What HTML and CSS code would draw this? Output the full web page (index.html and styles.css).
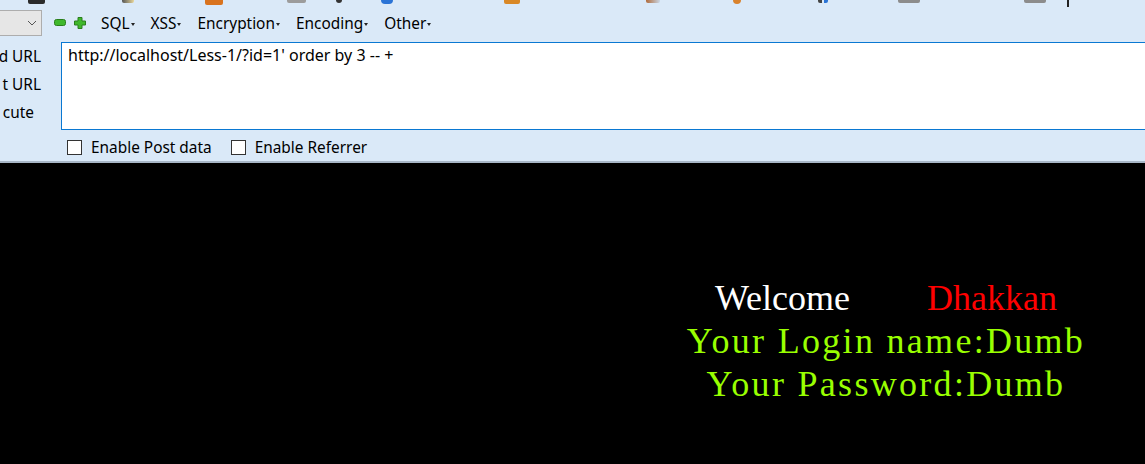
FILE: index.html
```html
<!DOCTYPE html>
<html>
<head>
<meta charset="utf-8">
<link rel="stylesheet" href="styles.css">
</head>
<body>
<div class="panel">
  <div class="iconstrip">
    <span class="frag f1"></span>
    <span class="frag f2"></span>
    <span class="frag f3"></span>
    <span class="frag f4"></span>
    <span class="frag f5"></span>
    <span class="frag f6"></span>
    <span class="frag f7"></span>
    <span class="frag f8"></span>
    <span class="frag f9"></span>
    <span class="frag f10"></span>
    <span class="frag f11"></span>
    <span class="frag f12"></span>
    <span class="frag f13"></span>
  </div>
  <div class="toolbar">
    <div class="select">
      <svg width="10" height="6" viewBox="0 0 10 6"><path d="M1 1 L5 5 L9 1" fill="none" stroke="#555" stroke-width="1"/></svg>
    </div>
    <svg class="ico minus" width="12" height="8" viewBox="0 0 12 8"><rect x="0.5" y="0.5" width="11" height="6" rx="2" fill="#3fb82c" stroke="#2a7e1c"/></svg>
    <svg class="ico plus" width="12" height="12" viewBox="0 0 12 12"><path d="M4 0.5 H8 V4 H11.5 V8 H8 V11.5 H4 V8 H0.5 V4 H4 Z" fill="#3fb82c" stroke="#2a7e1c" stroke-linejoin="round"/></svg>
    <div class="menu">
      <span class="mi">SQL<i class="tri"></i></span>
      <span class="mi">XSS<i class="tri"></i></span>
      <span class="mi">Encryption<i class="tri"></i></span>
      <span class="mi">Encoding<i class="tri"></i></span>
      <span class="mi">Other<i class="tri"></i></span>
    </div>
  </div>
  <div class="main">
    <div class="labels">
      <div class="lbl">d URL</div>
      <div class="lbl">t URL</div>
      <div class="lbl lbl-ex">cute</div>
    </div>
    <div class="urlbox">http://localhost/Less-1/?id=1' order by 3 -- +</div>
  </div>
  <div class="checks">
    <label class="chk"><span class="box"></span>Enable Post data</label>
    <label class="chk"><span class="box"></span>Enable Referrer</label>
  </div>
</div>
<div class="page">
  <div class="result">
    <div class="line"><span class="white">Welcome</span><span class="red">Dhakkan</span></div>
    <div class="line green">Your Login name:Dumb</div>
    <div class="line green">Your Password:Dumb</div>
  </div>
</div>
</body>
</html>
```
FILE: styles.css
```css
html, body {
  margin: 0;
  padding: 0;
  background: #000;
  overflow: hidden;
}
body {
  width: 1145px;
  height: 464px;
}
.panel {
  background: #dae9f8;
  height: 161px;
  border-bottom: 2px solid #a8b7c7;
  overflow: hidden;
  font-family: "Noto Sans", "Open Sans", sans-serif;
  font-size: 15.4px;
  color: #000;
}
.iconstrip {
  height: 10px;
  display: flex;
  align-items: flex-start;
}
.frag {
  display: block;
  height: 4px;
  border-radius: 0 0 2px 2px;
}
.f1 { margin-left: 28px; width: 17px; background: #2b2b2b; }
.f2 { margin-left: 77px; width: 12px; height: 3px; background: linear-gradient(90deg,#555,#e8d69a); }
.f3 { margin-left: 71px; width: 18px; height: 5px; background: #d9731e; }
.f4 { margin-left: 64px; width: 19px; height: 3px; background: #9c9c9c; }
.f5 { margin-left: 30px; width: 6px; height: 3px; background: #333; border-radius: 0 0 4px 4px; }
.f6 { margin-left: 39px; width: 12px; height: 4px; background: #2b74d6; border-radius: 0 0 6px 6px; }
.f7 { margin-left: 111px; width: 16px; height: 4px; background: #d98826; }
.f8 { margin-left: 126px; width: 14px; height: 3px; background: linear-gradient(90deg,#b06a3a,#c9d7e6); }
.f9 { margin-left: 73px; width: 8px; height: 4px; background: #d9822c; border-radius: 0 0 4px 4px; }
.f10 { margin-left: 77px; width: 10px; height: 3px; background: linear-gradient(90deg,#444 0 40%,transparent 40% 60%,#2b74d6 60%); }
.f11 { margin-left: 70px; width: 22px; height: 3px; background: #8c8c8c; }
.f12 { margin-left: 104px; width: 22px; height: 3px; background: #8c8c8c; }
.f13 { margin-left: 21px; width: 2px; height: 7px; background: #222; border-radius: 0; }

.toolbar {
  height: 26px;
  display: flex;
  align-items: center;
}
.select {
  width: 42px;
  height: 26px;
  box-sizing: border-box;
  border: 1px solid #adadad;
  border-left: none;
  background: #e6e6e6;
  display: flex;
  align-items: center;
  justify-content: flex-end;
  padding-right: 4px;
}
.ico { display: block; flex: none; }
.minus { margin-left: 12px; }
.plus { margin-left: 8px; }
.menu {
  display: flex;
  margin-left: 15px;
  margin-top: 2px;
  gap: 16px;
  line-height: 20px;
}
.mi {
  display: flex;
  align-items: center;
  white-space: nowrap;
}
.tri {
  display: block;
  width: 0;
  height: 0;
  border-left: 2px solid transparent;
  border-right: 2px solid transparent;
  border-top: 3px solid #222;
  margin-left: 1px;
  margin-top: 1px;
}

.main {
  display: flex;
  margin-top: 6px;
  height: 88px;
}
.labels {
  width: 61px;
  flex: none;
  display: flex;
  flex-direction: column;
}
.lbl {
  width: 41px;
  height: 28px;
  display: flex;
  justify-content: flex-end;
  align-items: center;
  white-space: nowrap;
}
.lbl-ex { width: 34px; }
.urlbox {
  flex: none;
  width: 1100px;
  height: 88px;
  box-sizing: border-box;
  border: 1px solid #0a78d2;
  background: #fff;
  padding: 2px 6px;
  font-size: 16px;
  line-height: 21px;
  white-space: nowrap;
}

.checks {
  display: flex;
  margin-top: 8px;
  padding-left: 67px;
  gap: 19px;
  height: 18px;
  align-items: center;
}
.chk {
  display: flex;
  align-items: center;
  white-space: nowrap;
}
.box {
  display: block;
  width: 15px;
  height: 15px;
  box-sizing: border-box;
  border: 1px solid #333;
  background: #fff;
  margin-right: 9px;
}

.page {
  height: 301px;
  padding-left: 627px;
  box-sizing: border-box;
}
.result {
  padding-top: 114px;
  display: flex;
  flex-direction: column;
  align-items: center;
  font-family: "Liberation Serif", "DejaVu Serif", serif;
  font-size: 36px;
  line-height: 43px;
  white-space: nowrap;
}
.line.green { letter-spacing: 2.3px; }
.white { color: #fff; }
.red { color: #ff0000; margin-left: 77px; }
.green { color: #99ff00; }
```
